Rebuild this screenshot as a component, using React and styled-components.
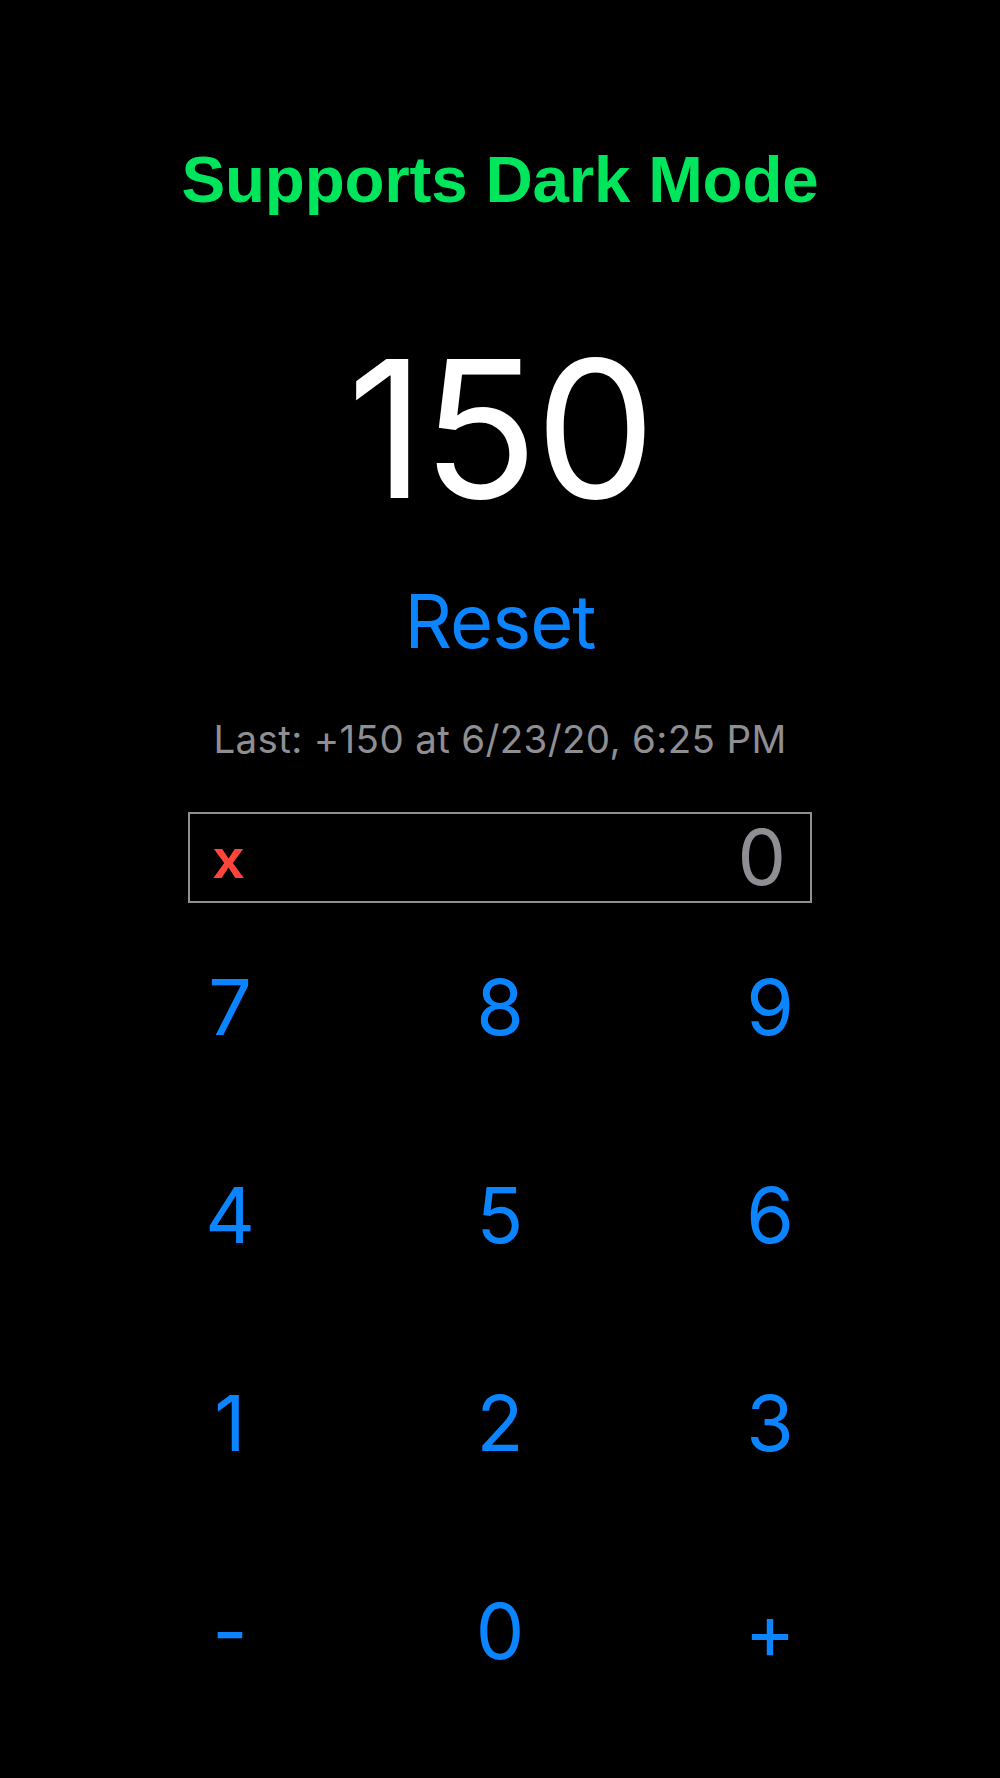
import React, { useState } from "react";
import styled, { createGlobalStyle } from "styled-components";

const GlobalStyle = createGlobalStyle`
  html, body {
    margin: 0;
    padding: 0;
    background: #000;
  }
  body {
    font-family: Inter, "Noto Sans", sans-serif;
    min-height: 1778px;
  }
`;

const Screen = styled.div`
  display: flex;
  flex-direction: column;
  align-items: center;
  min-height: 1778px;
  background: #000;
`;

const Title = styled.h1`
  margin: 147px 0 0;
  font-family: "Liberation Sans", Arial, sans-serif;
  font-weight: bold;
  font-size: 65.5px;
  line-height: 1;
  letter-spacing: -0.2px;
  color: #00e65c;
`;

const Count = styled.div`
  margin-top: 120px;
  font-size: 191px;
  line-height: 1;
  font-weight: 400;
  color: #fff;
  letter-spacing: -3px;
`;

const ResetButton = styled.button`
  margin-top: 60px;
  padding: 0;
  border: none;
  background: none;
  font-family: inherit;
  font-size: 74px;
  line-height: 1;
  color: #0a84ff;
  letter-spacing: -1px;
  cursor: pointer;
`;

const LastLine = styled.div`
  margin-top: 62px;
  font-size: 38.5px;
  line-height: 1;
  color: #8e8e93;
  letter-spacing: 0.35px;
`;

const Column = styled.div`
  width: 624px;
  display: flex;
  flex-direction: column;
`;

const EntryBox = styled.div`
  margin-top: 54px;
  height: 91px;
  box-sizing: border-box;
  border: 2px solid #8e8e93;
  display: flex;
  align-items: center;
  justify-content: space-between;
  padding: 0 24px 0 23px;
`;

const ClearMark = styled.span`
  font-family: "Liberation Sans", Arial, sans-serif;
  font-weight: bold;
  font-size: 56px;
  line-height: 1;
  color: #ff453a;
  margin-top: 2px;
`;

const EntryValue = styled.span`
  font-size: 77px;
  line-height: 1;
  color: #8e8e93;
`;

const KeyRow = styled.div`
  display: flex;
  justify-content: space-between;
`;

const Key = styled.button`
  width: 84px;
  padding: 65px 0;
  border: none;
  background: none;
  font-family: inherit;
  font-size: 77px;
  line-height: 78px;
  color: #0a84ff;
  text-align: center;
  cursor: pointer;
`;

const rows = [
  ["7", "8", "9"],
  ["4", "5", "6"],
  ["1", "2", "3"],
  ["-", "0", "+"],
];

export default function App() {
  const [count, setCount] = useState(150);
  const [entry, setEntry] = useState("0");

  const press = k => {
    if (k === "+" || k === "-") {
      const n = parseInt(entry, 10) || 0;
      setCount(c => (k === "+" ? c + n : c - n));
      setEntry("0");
      return;
    }
    setEntry(e => (e === "0" ? k : e + k));
  };

  return (
    <Screen>
      <GlobalStyle />
      <Title>Supports Dark Mode</Title>
      <Count>{count}</Count>
      <ResetButton onClick={() => setCount(0)}>Reset</ResetButton>
      <LastLine>Last: +150 at 6/23/20, 6:25 PM</LastLine>
      <Column>
        <EntryBox>
          <ClearMark onClick={() => setEntry("0")}>x</ClearMark>
          <EntryValue>{entry}</EntryValue>
        </EntryBox>
        {rows.map(row => (
          <KeyRow key={row.join("")}>
            {row.map(k => (
              <Key key={k} onClick={() => press(k)}>
                {k}
              </Key>
            ))}
          </KeyRow>
        ))}
      </Column>
    </Screen>
  );
}
